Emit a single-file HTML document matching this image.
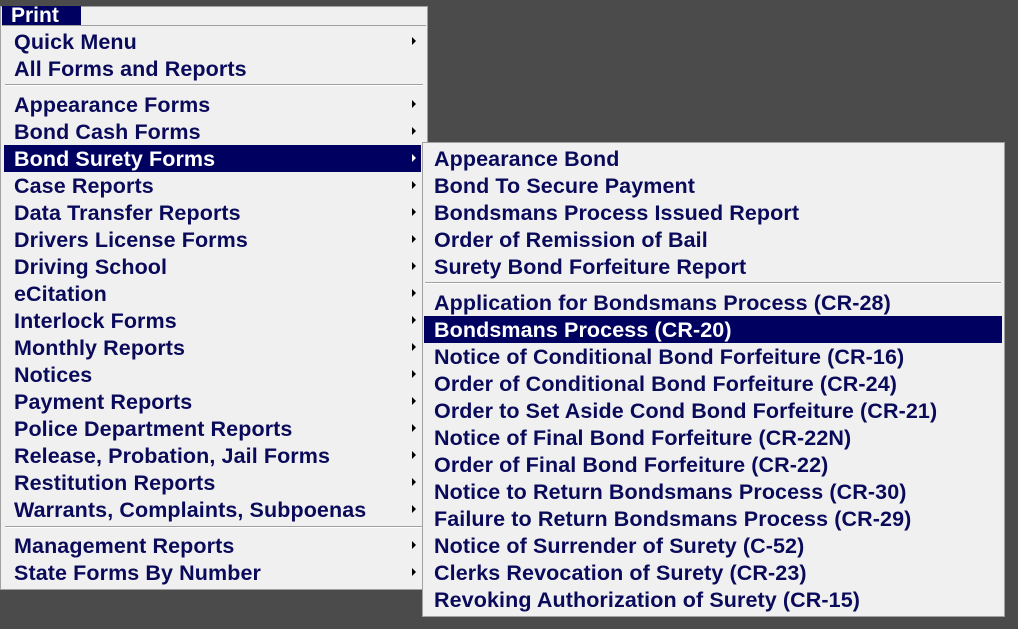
<!DOCTYPE html>
<html><head><style>
body{margin:0;width:1018px;height:629px;background:#4b4b4b;position:relative;overflow:hidden;font-family:"Liberation Sans",Arial,sans-serif;}
.menu{position:absolute;background:#f0f0f0;border:1px solid #a0a0a0;box-sizing:border-box;}
.it{position:absolute;height:27px;line-height:28px;font-weight:bold;font-size:21.5px;letter-spacing:0.1px;color:#0a0a5a;white-space:nowrap;}
.hl{background:#000060;color:#fff;}
.ar{position:absolute;width:0;height:0;border-top:4px solid transparent;border-bottom:4px solid transparent;border-left:4px solid #000;}
.hl .ar{border-left-color:#fff;}
.sep{position:absolute;height:1px;background:#a0a0a0;border-bottom:1px solid #fff;}
</style></head><body>
<div class="menu" style="left:0;top:6px;width:428px;height:584px;"></div>
<div style="position:absolute;left:2px;top:6px;width:79px;height:19px;background:#000060;color:#fff;font-weight:bold;font-size:21px;line-height:20px;padding-left:9px;box-sizing:border-box;overflow:hidden">Print</div>
<div style="position:absolute;left:2px;top:25px;width:424px;height:1px;background:#a0a0a0"></div>
<div id="m1"></div>
<div class="menu" style="left:422px;top:142px;width:583px;height:475px;"></div>
<div id="m2"></div>
<script>
function add(list,tops,x,w,tx,arrow,hl){
 var h='';
 list.forEach(function(t,i){
  var cls='it'+(t===hl?' hl':'');
  h+='<div class="'+cls+'" style="left:'+x+'px;top:'+tops[i]+'px;width:'+w+'px;"><span style="position:absolute;left:'+tx+'px">'+t+'</span>'+(arrow&&arrow(t)?'<i class="ar" style="left:'+(412-x)+'px;top:9px"></i>':'')+'</div>';
 });
 return h;
}
var a=['Quick Menu','All Forms and Reports'];
var b=['Appearance Forms','Bond Cash Forms','Bond Surety Forms','Case Reports','Data Transfer Reports','Drivers License Forms','Driving School','eCitation','Interlock Forms','Monthly Reports','Notices','Payment Reports','Police Department Reports','Release, Probation, Jail Forms','Restitution Reports','Warrants, Complaints, Subpoenas'];
var c=['Management Reports','State Forms By Number'];
var t=[],h='';
a.forEach(function(_,i){t.push(28+i*27)});
h+=add(a,t,4,417,10,function(x){return x==='Quick Menu'});
t=[];b.forEach(function(_,i){t.push(91+i*27)});
h+=add(b,t,4,417,10,function(){return true},'Bond Surety Forms');
t=[];c.forEach(function(_,i){t.push(532+i*27)});
h+=add(c,t,4,417,10,function(){return true});
h+='<div class="sep" style="left:5px;top:84px;width:418px"></div><div class="sep" style="left:5px;top:526px;width:418px"></div>';
document.getElementById('m1').innerHTML=h;
var d=['Appearance Bond','Bond To Secure Payment','Bondsmans Process Issued Report','Order of Remission of Bail','Surety Bond Forfeiture Report'];
var e=['Application for Bondsmans Process (CR-28)','Bondsmans Process (CR-20)','Notice of Conditional Bond Forfeiture (CR-16)','Order of Conditional Bond Forfeiture (CR-24)','Order to Set Aside Cond Bond Forfeiture (CR-21)','Notice of Final Bond Forfeiture (CR-22N)','Order of Final Bond Forfeiture (CR-22)','Notice to Return Bondsmans Process (CR-30)','Failure to Return Bondsmans Process (CR-29)','Notice of Surrender of Surety (C-52)','Clerks Revocation of Surety (CR-23)','Revoking Authorization of Surety (CR-15)'];
h='';t=[];d.forEach(function(_,i){t.push(145+i*27)});
h+=add(d,t,424,578,10,null);
t=[];e.forEach(function(_,i){t.push(289+i*27)});
h+=add(e,t,424,578,10,null,'Bondsmans Process (CR-20)');
h+='<div class="sep" style="left:425px;top:282px;width:576px"></div>';
document.getElementById('m2').innerHTML=h;
</script>
</body></html>
